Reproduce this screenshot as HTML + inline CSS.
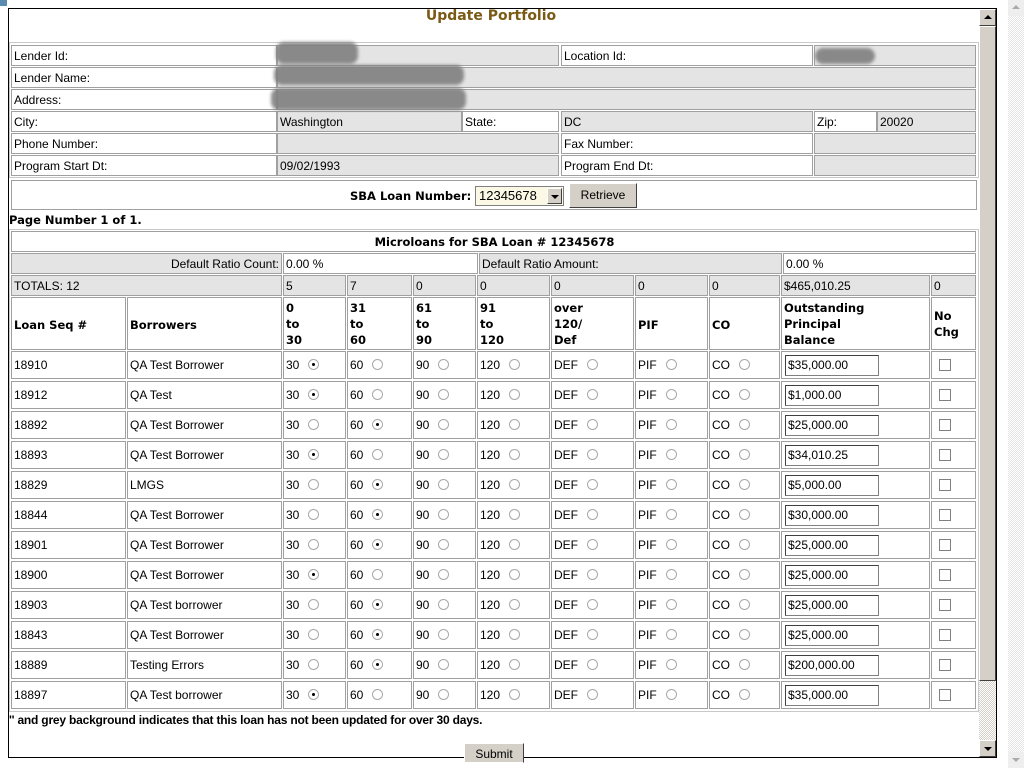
<!DOCTYPE html>
<html><head><meta charset="utf-8">
<style>
*{box-sizing:border-box;margin:0;padding:0}
body{width:1024px;height:768px;background:#fff;position:relative;overflow:hidden;font:12px "Liberation Sans",Arial,sans-serif;color:#000}
.a{position:absolute}
.c{position:absolute;border:1px solid #a0a0a0;padding-left:2px;display:flex;align-items:center;white-space:nowrap;overflow:hidden}
.g{background:#e4e4e4}
.b{font:bold 12px "DejaVu Sans",Verdana,sans-serif;font-size:11.5px}
.r{display:inline-block;width:11px;height:11px;border-radius:50%;border:1px solid #a8a8a8;background:#fff;margin-left:9px;position:relative;top:-1px}
.r.on::after{content:"";position:absolute;left:3px;top:3px;width:3px;height:3px;border-radius:50%;background:#000}
.blur{position:absolute;background:#808080;border-radius:8px;filter:blur(1.5px);opacity:.9}
.row{position:absolute;left:0;width:1000px;height:28px}
.row .c{height:28px;top:0}
.k1{left:11px;width:115px}.k2{left:127px;width:155px}.k3{left:283px;width:63px}.k4{left:347px;width:65px}.k5{left:413px;width:63px}.k6{left:477px;width:73px}.k7{left:551px;width:83px}.k8{left:635px;width:73px}.k9{left:709px;width:71px}.k10{left:781px;width:149px}.k11{left:931px;width:45px;justify-content:flex-start;padding-left:7px}
.in{width:94px;height:21px;border:1px solid #808080;border-top-color:#404040;border-left-color:#404040;background:#fff;padding-left:2px;line-height:19px;margin-left:1px}
.cb{width:12px;height:12px;border:1px solid #808080;background:#fff}
</style></head><body>
<div class="a" style="left:0;top:0;width:7px;height:6px;background:#5a8cb0"></div>
<div class="a" style="left:8px;top:8px;width:989px;height:750px;border:1px solid #000;border-right:2px solid #000;overflow:hidden"></div>
<div class="a" style="left:0;top:8px;width:1024px;text-align:center;padding-right:42px;font:bold 14px 'DejaVu Sans',Verdana,sans-serif;color:#7a5a14">Update Portfolio</div>
<div class="a" style="left:9px;top:42px;width:970px;height:136px;border:1px solid #c8c8c8"></div>
<div class="c" style="left:11px;top:45px;width:266px;height:21px">Lender Id:</div>
<div class="c g" style="left:277px;top:45px;width:282px;height:21px"></div>
<div class="c" style="left:561px;top:45px;width:252px;height:21px">Location Id:</div>
<div class="c g" style="left:814px;top:45px;width:162px;height:21px"></div>
<div class="c" style="left:11px;top:67px;width:266px;height:21px">Lender Name:</div>
<div class="c g" style="left:277px;top:67px;width:699px;height:21px"></div>
<div class="c" style="left:11px;top:89px;width:266px;height:21px">Address:</div>
<div class="c g" style="left:277px;top:89px;width:699px;height:21px"></div>
<div class="c" style="left:11px;top:111px;width:266px;height:21px">City:</div>
<div class="c g" style="left:277px;top:111px;width:185px;height:21px">Washington</div>
<div class="c" style="left:462px;top:111px;width:97px;height:21px">State:</div>
<div class="c g" style="left:561px;top:111px;width:252px;height:21px">DC</div>
<div class="c" style="left:814px;top:111px;width:63px;height:21px">Zip:</div>
<div class="c g" style="left:877px;top:111px;width:99px;height:21px">20020</div>
<div class="c" style="left:11px;top:133px;width:266px;height:21px">Phone Number:</div>
<div class="c g" style="left:277px;top:133px;width:282px;height:21px"></div>
<div class="c" style="left:561px;top:133px;width:252px;height:21px">Fax Number:</div>
<div class="c g" style="left:814px;top:133px;width:162px;height:21px"></div>
<div class="c" style="left:11px;top:155px;width:266px;height:21px">Program Start Dt:</div>
<div class="c g" style="left:277px;top:155px;width:282px;height:21px">09/02/1993</div>
<div class="c" style="left:561px;top:155px;width:252px;height:21px">Program End Dt:</div>
<div class="c g" style="left:814px;top:155px;width:162px;height:21px"></div>
<div class="blur" style="left:276px;top:42px;width:82px;height:22px"></div>
<div class="blur" style="left:274px;top:65px;width:190px;height:20px"></div>
<div class="blur" style="left:271px;top:88px;width:195px;height:22px"></div>
<div class="blur" style="left:815px;top:48px;width:60px;height:16px"></div>
<div class="a" style="left:11px;top:180px;width:966px;height:30px;border:1px solid #a0a0a0"></div>
<div class="a b" style="left:350px;top:189px">SBA Loan Number:</div>
<div class="a" style="left:475px;top:186px;width:89px;height:20px;border:1px solid #808080;background:#fbf9e6;padding-left:3px;line-height:18px;font-size:13px">12345678
<div class="a" style="right:1px;top:1px;width:15px;height:16px;background:#d4d0c8;border:1px solid #fff;border-right-color:#404040;border-bottom-color:#404040"><div class="a" style="left:3px;top:6px;border:4px solid transparent;border-top:4px solid #000;border-bottom:0"></div></div></div>
<div class="a" style="left:569px;top:183px;width:68px;height:25px;background:#d4d0c8;border:1px solid #fff;border-right-color:#404040;border-bottom-color:#404040;text-align:center;line-height:22px">Retrieve</div>
<div class="a b" style="left:9px;top:213px">Page Number 1 of 1.</div>
<div class="a" style="left:9px;top:229px;width:970px;height:483px;border:1px solid #c8c8c8"></div>
<div class="c b" style="left:11px;top:231px;width:965px;height:21px;justify-content:center">Microloans for SBA Loan # 12345678</div>
<div class="c g" style="left:11px;top:253px;width:271px;height:21px;justify-content:flex-end;padding-right:2px">Default Ratio Count:</div>
<div class="c" style="left:283px;top:253px;width:195px;height:21px">0.00 %</div>
<div class="c g" style="left:479px;top:253px;width:303px;height:21px">Default Ratio Amount:</div>
<div class="c" style="left:783px;top:253px;width:193px;height:21px">0.00 %</div>
<div class="row" style="top:275px;height:21px">
<div class="c g k1" style="width:271px;height:21px">TOTALS: 12</div>
<div class="c g k3" style="height:21px">5</div><div class="c g k4" style="height:21px">7</div><div class="c g k5" style="height:21px">0</div><div class="c g k6" style="height:21px">0</div><div class="c g k7" style="height:21px">0</div><div class="c g k8" style="height:21px">0</div><div class="c g k9" style="height:21px">0</div><div class="c g k10" style="height:21px">$465,010.25</div><div class="c g k11" style="height:21px;padding-left:2px">0</div>
</div>
<div class="row b" style="top:297px;height:53px;line-height:16px">
<div class="c k1" style="height:53px">Loan Seq #</div><div class="c k2" style="height:53px">Borrowers</div>
<div class="c k3" style="height:53px">0<br>to<br>30</div><div class="c k4" style="height:53px">31<br>to<br>60</div><div class="c k5" style="height:53px">61<br>to<br>90</div><div class="c k6" style="height:53px">91<br>to<br>120</div><div class="c k7" style="height:53px">over<br>120/<br>Def</div><div class="c k8" style="height:53px">PIF</div><div class="c k9" style="height:53px">CO</div><div class="c k10" style="height:53px">Outstanding<br>Principal<br>Balance</div><div class="c k11" style="height:53px;padding-left:2px">No<br>Chg</div>
</div>
<style>.row.b .c{display:block;padding-top:2px}.row.b .k1,.row.b .k2,.row.b .k8,.row.b .k9{display:flex}.row.b .k11{padding-top:10px}</style>

<div class="row" style="top:351px"><div class="c k1">18910</div><div class="c k2">QA Test Borrower</div><div class="c k3">30<i class="r on"></i></div><div class="c k4">60<i class="r"></i></div><div class="c k5">90<i class="r"></i></div><div class="c k6">120<i class="r"></i></div><div class="c k7">DEF<i class="r"></i></div><div class="c k8">PIF<i class="r"></i></div><div class="c k9">CO<i class="r"></i></div><div class="c k10"><div class="in">$35,000.00</div></div><div class="c k11"><div class="cb"></div></div></div>
<div class="row" style="top:381px"><div class="c k1">18912</div><div class="c k2">QA Test</div><div class="c k3">30<i class="r on"></i></div><div class="c k4">60<i class="r"></i></div><div class="c k5">90<i class="r"></i></div><div class="c k6">120<i class="r"></i></div><div class="c k7">DEF<i class="r"></i></div><div class="c k8">PIF<i class="r"></i></div><div class="c k9">CO<i class="r"></i></div><div class="c k10"><div class="in">$1,000.00</div></div><div class="c k11"><div class="cb"></div></div></div>
<div class="row" style="top:411px"><div class="c k1">18892</div><div class="c k2">QA Test Borrower</div><div class="c k3">30<i class="r"></i></div><div class="c k4">60<i class="r on"></i></div><div class="c k5">90<i class="r"></i></div><div class="c k6">120<i class="r"></i></div><div class="c k7">DEF<i class="r"></i></div><div class="c k8">PIF<i class="r"></i></div><div class="c k9">CO<i class="r"></i></div><div class="c k10"><div class="in">$25,000.00</div></div><div class="c k11"><div class="cb"></div></div></div>
<div class="row" style="top:441px"><div class="c k1">18893</div><div class="c k2">QA Test Borrower</div><div class="c k3">30<i class="r on"></i></div><div class="c k4">60<i class="r"></i></div><div class="c k5">90<i class="r"></i></div><div class="c k6">120<i class="r"></i></div><div class="c k7">DEF<i class="r"></i></div><div class="c k8">PIF<i class="r"></i></div><div class="c k9">CO<i class="r"></i></div><div class="c k10"><div class="in">$34,010.25</div></div><div class="c k11"><div class="cb"></div></div></div>
<div class="row" style="top:471px"><div class="c k1">18829</div><div class="c k2">LMGS</div><div class="c k3">30<i class="r"></i></div><div class="c k4">60<i class="r on"></i></div><div class="c k5">90<i class="r"></i></div><div class="c k6">120<i class="r"></i></div><div class="c k7">DEF<i class="r"></i></div><div class="c k8">PIF<i class="r"></i></div><div class="c k9">CO<i class="r"></i></div><div class="c k10"><div class="in">$5,000.00</div></div><div class="c k11"><div class="cb"></div></div></div>
<div class="row" style="top:501px"><div class="c k1">18844</div><div class="c k2">QA Test Borrower</div><div class="c k3">30<i class="r"></i></div><div class="c k4">60<i class="r on"></i></div><div class="c k5">90<i class="r"></i></div><div class="c k6">120<i class="r"></i></div><div class="c k7">DEF<i class="r"></i></div><div class="c k8">PIF<i class="r"></i></div><div class="c k9">CO<i class="r"></i></div><div class="c k10"><div class="in">$30,000.00</div></div><div class="c k11"><div class="cb"></div></div></div>
<div class="row" style="top:531px"><div class="c k1">18901</div><div class="c k2">QA Test Borrower</div><div class="c k3">30<i class="r"></i></div><div class="c k4">60<i class="r on"></i></div><div class="c k5">90<i class="r"></i></div><div class="c k6">120<i class="r"></i></div><div class="c k7">DEF<i class="r"></i></div><div class="c k8">PIF<i class="r"></i></div><div class="c k9">CO<i class="r"></i></div><div class="c k10"><div class="in">$25,000.00</div></div><div class="c k11"><div class="cb"></div></div></div>
<div class="row" style="top:561px"><div class="c k1">18900</div><div class="c k2">QA Test Borrower</div><div class="c k3">30<i class="r on"></i></div><div class="c k4">60<i class="r"></i></div><div class="c k5">90<i class="r"></i></div><div class="c k6">120<i class="r"></i></div><div class="c k7">DEF<i class="r"></i></div><div class="c k8">PIF<i class="r"></i></div><div class="c k9">CO<i class="r"></i></div><div class="c k10"><div class="in">$25,000.00</div></div><div class="c k11"><div class="cb"></div></div></div>
<div class="row" style="top:591px"><div class="c k1">18903</div><div class="c k2">QA Test borrower</div><div class="c k3">30<i class="r"></i></div><div class="c k4">60<i class="r on"></i></div><div class="c k5">90<i class="r"></i></div><div class="c k6">120<i class="r"></i></div><div class="c k7">DEF<i class="r"></i></div><div class="c k8">PIF<i class="r"></i></div><div class="c k9">CO<i class="r"></i></div><div class="c k10"><div class="in">$25,000.00</div></div><div class="c k11"><div class="cb"></div></div></div>
<div class="row" style="top:621px"><div class="c k1">18843</div><div class="c k2">QA Test Borrower</div><div class="c k3">30<i class="r"></i></div><div class="c k4">60<i class="r on"></i></div><div class="c k5">90<i class="r"></i></div><div class="c k6">120<i class="r"></i></div><div class="c k7">DEF<i class="r"></i></div><div class="c k8">PIF<i class="r"></i></div><div class="c k9">CO<i class="r"></i></div><div class="c k10"><div class="in">$25,000.00</div></div><div class="c k11"><div class="cb"></div></div></div>
<div class="row" style="top:651px"><div class="c k1">18889</div><div class="c k2">Testing Errors</div><div class="c k3">30<i class="r"></i></div><div class="c k4">60<i class="r on"></i></div><div class="c k5">90<i class="r"></i></div><div class="c k6">120<i class="r"></i></div><div class="c k7">DEF<i class="r"></i></div><div class="c k8">PIF<i class="r"></i></div><div class="c k9">CO<i class="r"></i></div><div class="c k10"><div class="in">$200,000.00</div></div><div class="c k11"><div class="cb"></div></div></div>
<div class="row" style="top:681px"><div class="c k1">18897</div><div class="c k2">QA Test borrower</div><div class="c k3">30<i class="r on"></i></div><div class="c k4">60<i class="r"></i></div><div class="c k5">90<i class="r"></i></div><div class="c k6">120<i class="r"></i></div><div class="c k7">DEF<i class="r"></i></div><div class="c k8">PIF<i class="r"></i></div><div class="c k9">CO<i class="r"></i></div><div class="c k10"><div class="in">$35,000.00</div></div><div class="c k11"><div class="cb"></div></div></div>

<div class="a" style="left:9px;top:713px;font:bold 12px 'Liberation Sans',Arial,sans-serif;letter-spacing:-0.2px">'' and grey background indicates that this loan has not been updated for over 30 days.</div>
<div class="a" style="left:464px;top:743px;width:60px;height:20px;background:#d4d0c8;border:1px solid #fff;border-right-color:#404040;text-align:center;line-height:20px">Submit</div>
<div class="a" style="left:979px;top:9px;width:17px;height:748px;background:repeating-conic-gradient(#d4d0c8 0 25%,#fff 0 50%) 0 0/2px 2px"></div>
<div class="a" style="left:979px;top:9px;width:17px;height:17px;background:#d4d0c8;border:1px solid #fff;border-right-color:#404040;border-bottom-color:#404040"><div class="a" style="left:4px;top:5px;border:4px solid transparent;border-bottom:4px solid #000;border-top:0"></div></div>
<div class="a" style="left:979px;top:26px;width:17px;height:655px;background:#d4d0c8;border:1px solid #fff;border-right-color:#404040;border-bottom-color:#404040"></div>
<div class="a" style="left:979px;top:740px;width:17px;height:17px;background:#d4d0c8;border:1px solid #fff;border-right-color:#404040;border-bottom-color:#404040"><div class="a" style="left:4px;top:6px;border:4px solid transparent;border-top:4px solid #000;border-bottom:0"></div></div>
<div class="a" style="left:1008px;top:0;width:16px;height:768px;background:repeating-conic-gradient(#e4e4e4 0 25%,#fff 0 50%) 0 0/2px 2px"></div>
<div class="a" style="left:1008px;top:0;width:16px;height:16px;background:#eeeeee"><div class="a" style="left:4px;top:5px;border:4px solid transparent;border-bottom:4px solid #aaa;border-top:0"></div></div>
<div class="a" style="left:1008px;top:752px;width:16px;height:16px;background:#eeeeee"><div class="a" style="left:4px;top:6px;border:4px solid transparent;border-top:4px solid #aaa;border-bottom:0"></div></div>
</body></html>
